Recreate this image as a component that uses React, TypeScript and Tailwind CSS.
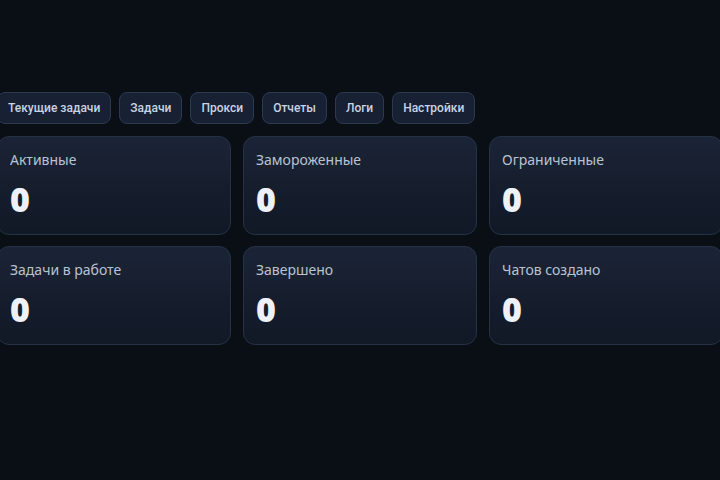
const TABS = ["Текущие задачи", "Задачи", "Прокси", "Отчеты", "Логи", "Настройки"];

const STATS = [
  { label: "Активные", value: 0 },
  { label: "Замороженные", value: 0 },
  { label: "Ограниченные", value: 0 },
  { label: "Задачи в работе", value: 0 },
  { label: "Завершено", value: 0 },
  { label: "Чатов создано", value: 0 },
];

export default function App() {
  return (
    <div
      className="h-[480px] w-[720px] overflow-hidden bg-[#0a0e15]"
      style={{ fontFamily: '"Noto Sans", "Open Sans", sans-serif' }}
    >
      <div className="ml-[-3px] w-[726px] pt-[92px]">
        {/* Tabs */}
        <div className="flex gap-2">
          {TABS.map((tab) => (
            <button
              key={tab}
              className="h-[32px] rounded-lg border border-[#2c3a50] bg-[#172133] px-[10px] text-[12px] font-medium text-[#c9d3e2]"
              style={{ fontFamily: 'Roboto, "Noto Sans", sans-serif' }}
            >
              {tab}
            </button>
          ))}
        </div>

        {/* Stats grid */}
        <div className="mt-[12px] grid grid-cols-3 gap-x-3 gap-y-[11px]">
          {STATS.map((s) => (
            <div
              key={s.label}
              className="h-[99px] rounded-xl border border-[#253246] bg-gradient-to-b from-[#1b2436] to-[#111826] px-3 pt-[13px]"
            >
              <div className="text-[14px] leading-5 text-[#b9c3d1]">{s.label}</div>
              <div className="mt-[9px] text-[34px] font-black leading-10 text-[#eef2f8]">{s.value}</div>
            </div>
          ))}
        </div>
      </div>
    </div>
  );
}
